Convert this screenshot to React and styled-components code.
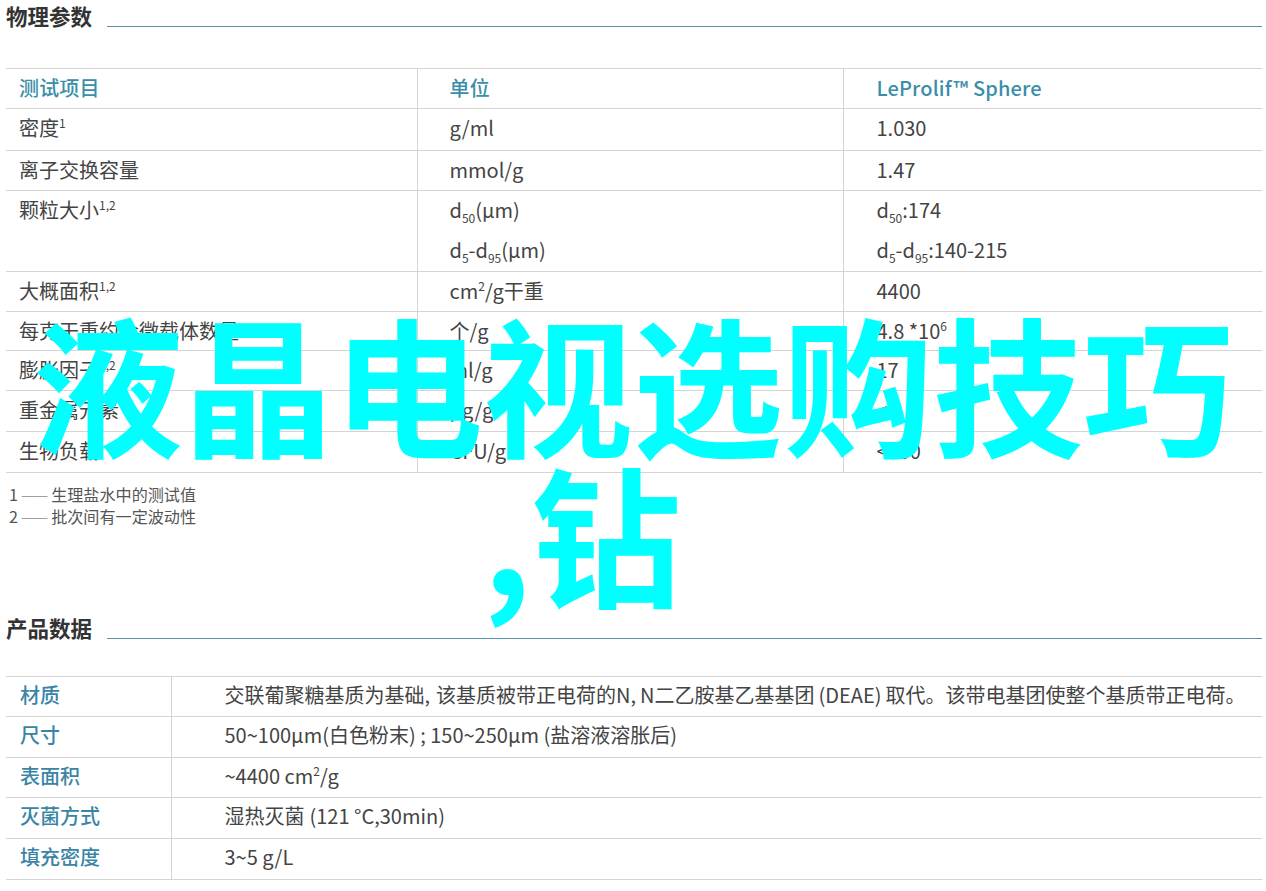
import React from "react";
import styled, { createGlobalStyle } from "styled-components";

const Global = createGlobalStyle`
  html, body { margin: 0; padding: 0; background: #fff; }
  body { font-family: "Noto Sans CJK SC", "Noto Sans", sans-serif; color: #444; }
`;
const Page = styled.div`
  position: relative;
  width: 1266px;
  height: 891px;
  overflow: hidden;
  padding: 6px 4px 0 6px;
  box-sizing: border-box;
`;
const SectionHead = styled.div`
  display: flex;
  align-items: flex-end;
  height: 21px;
  gap: 15px;
  margin-top: ${(p) => p.$top || 0}px;
`;
const SectionTitle = styled.h2`
  margin: 0 0 -1px;
  font-size: 21.5px;
  line-height: 24px;
  font-weight: 700;
  color: #333;
  white-space: nowrap;
`;
const Rule = styled.div`
  flex: 1;
  height: 1px;
  background: #5d90a8;
`;
const Table = styled.table`
  width: 1256px;
  table-layout: fixed;
  border-collapse: collapse;
  margin-top: ${(p) => p.$top}px;
  font-size: 20px;
  color: #444;
  border-top: 1px solid #d4d4d4;
`;
const Row = styled.tr`
  height: ${(p) => p.$h}px;
  border-bottom: 1px solid #d4d4d4;
`;
const Cell = styled.td`
  padding: 0 0 0 ${(p) => p.$pad}px;
  border-left: ${(p) => (p.$first ? "none" : "1px solid #d4d4d4")};
  vertical-align: top;
  line-height: ${(p) => p.$lh || 37}px;
  white-space: nowrap;
`;
const HeadCell = styled(Cell)`
  color: #3a8ea8;
  font-weight: 500;
  letter-spacing: 0.15px;
`;
const Label = styled(Cell)`
  color: #3a84a6;
  font-weight: 500;
`;
const Line = styled.div`
  height: 40px;
`;
const Sup = styled.sup`
  font-size: 12px;
  line-height: 0;
`;
const Sub = styled.sub`
  font-size: 12px;
  line-height: 0;
`;
const Gap = styled.span`
  display: inline-block;
  width: ${(p) => p.$w}px;
`;
const Notes = styled.div`
  margin: 12px 0 0 3px;
  font-size: 16.1px;
  line-height: 19px;
  color: #555;
  display: flex;
  flex-direction: column;
  gap: 2px;
`;
const Dash = styled.span`
  font-size: 13px;
`;
const Overlay = styled.div`
  position: absolute;
  left: 13px;
  top: 306px;
  width: 1240px;
  text-align: center;
  font-size: 150px;
  line-height: 150px;
  font-weight: 700;
  color: #00ffff;
  font-family: "Noto Sans CJK SC", sans-serif;
`;
const OverlaySecond = styled.div`
  padding-right: 102px;
`;

const params = [
  [<>密度<Sup>1</Sup></>, "g/ml", "1.030", 42],
  ["离子交换容量", "mmol/g", "1.47", 40],
  [
    <>颗粒大小<Sup>1,2</Sup></>,
    <><Line>d<Sub>50</Sub>(µm)</Line><Line>d<Sub>5</Sub>-d<Sub>95</Sub>(µm)</Line></>,
    <><Line>d<Sub>50</Sub>:174</Line><Line>d<Sub>5</Sub>-d<Sub>95</Sub>:140-215</Line></>,
    81,
  ],
  [<>大概面积<Sup>1,2</Sup></>, <>cm<Sup>2</Sup>/g干重</>, "4400", 40],
  ["每克干重约含微载体数量", "个/g", <>4.8 *10<Sup>6</Sup></>, 39],
  [<>膨胀因子<Sup>1,2</Sup></>, "ml/g", "17", 40],
  ["重金属元素", "µg/g", "<5", 41],
  ["生物负载", "CFU/g", "<100", 41],
];
const data = [
  ["材质", <>交联葡聚糖基质为基础,<Gap $w={6} />该基质被带正电荷的N,<Gap $w={4} />N二乙胺基乙基基团<Gap $w={4} />(DEAE)<Gap $w={4} />取代。该带电基团使整个基质带正电荷。</>, 40],
  ["尺寸", "50~100µm(白色粉末) ; 150~250µm (盐溶液溶胀后)", 41],
  ["表面积", <>~4400 cm<Sup>2</Sup>/g</>, 40],
  ["灭菌方式", <>湿热灭菌<Gap $w={5} />(121 °C,30min)</>, 41],
  ["填充密度", "3~5 g/L", 41],
];

export default function App() {
  return (
    <Page>
      <Global />
      <SectionHead>
        <SectionTitle>物理参数</SectionTitle>
        <Rule />
      </SectionHead>
      <Table $top={41}>
        <colgroup>
          <col style={{ width: 411 }} />
          <col style={{ width: 426 }} />
          <col />
        </colgroup>
        <tbody>
          <Row $h={40}>
            <HeadCell $first $pad={13}>测试项目</HeadCell>
            <HeadCell $pad={32}>单位</HeadCell>
            <HeadCell $pad={33}>LeProlif™ Sphere</HeadCell>
          </Row>
          {params.map((r, i) => (
            <Row key={i} $h={r[3]}>
              <Cell $first $pad={13}>{r[0]}</Cell>
              <Cell $pad={32}>{r[1]}</Cell>
              <Cell $pad={33}>{r[2]}</Cell>
            </Row>
          ))}
        </tbody>
      </Table>
      <Notes>
        <div>1 <Dash>──</Dash> 生理盐水中的测试值</div>
        <div>2 <Dash>──</Dash> 批次间有一定波动性</div>
      </Notes>
      <SectionHead $top={91}>
        <SectionTitle>产品数据</SectionTitle>
        <Rule />
      </SectionHead>
      <Table $top={37}>
        <colgroup>
          <col style={{ width: 165 }} />
          <col />
        </colgroup>
        <tbody>
          {data.map((r, i) => (
            <Row key={i} $h={r[2]}>
              <Label $first $pad={14} $lh={35}>{r[0]}</Label>
              <Cell $pad={53} $lh={35}>{r[1]}</Cell>
            </Row>
          ))}
        </tbody>
      </Table>
      <Overlay>
        <div>液晶电视选购技巧</div>
        <OverlaySecond>,钻</OverlaySecond>
      </Overlay>
    </Page>
  );
}
